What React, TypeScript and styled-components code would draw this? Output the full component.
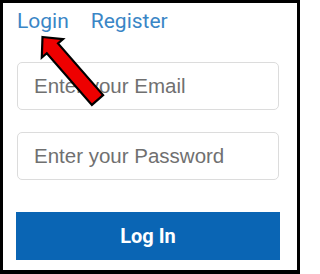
import {createGlobalStyle, styled} from 'styled-components';

const GlobalStyle = createGlobalStyle`
	html, body {
		margin: 0;
		padding: 0;
		background: #ffffff;
	}
	* {
		box-sizing: border-box;
	}
`;

const Card = styled.div`
	position: relative;
	width: 300px;
	height: 274px;
	border: 3px solid #000000;
	border-bottom-width: 4px;
	background: #ffffff;
	padding: 6px 14px 0 13px;
	display: flex;
	flex-direction: column;
`;

const Tabs = styled.nav`
	display: flex;
	gap: 22px;
	padding-left: 1px;
	font-family: Roboto, 'Liberation Sans', sans-serif;
	font-size: 21px;
	line-height: 24.6px;
`;

const TabLink = styled.a`
	color: #3a86c6;
	text-decoration: none;
	cursor: pointer;
`;

const Form = styled.form`
	display: flex;
	flex-direction: column;
	margin-top: 28px;
`;

const Field = styled.input`
	width: 262px;
	height: 48px;
	margin: 0 0 0 1px;
	padding: 0 16px;
	border: 1px solid #dcdcdc;
	border-radius: 5px;
	font-family: 'Liberation Sans', Arial, sans-serif;
	font-size: 20.5px;
	color: #333333;
	background: #ffffff;
	outline: none;
	& + & {
		margin-top: 22px;
	}
	&::placeholder {
		color: #707070;
	}
`;

const Submit = styled.button`
	width: 264px;
	height: 48px;
	margin-top: 32px;
	border: none;
	background: #0a65b4;
	color: #ffffff;
	font-family: Roboto, 'Liberation Sans', sans-serif;
	font-weight: 700;
	font-size: 20px;
	cursor: pointer;
`;

const Overlay = styled.svg`
	position: absolute;
	left: -3px;
	top: -3px;
	width: 300px;
	height: 274px;
	pointer-events: none;
`;

function Arrow() {
	return (
		<Overlay viewBox="0 0 300 274">
			<polygon
				points="42.5,37 63,39.1 58,43.4 103.1,95.1 91.9,104.9 46.8,53.2 41.8,57.5"
				fill="#ee0000"
				stroke="#000000"
				strokeWidth="2.2"
				strokeLinejoin="miter"
			/>
		</Overlay>
	);
}

function App() {
	return (
		<>
			<GlobalStyle />
			<Card>
				<Tabs>
					<TabLink>Login</TabLink>
					<TabLink>Register</TabLink>
				</Tabs>
				<Form onSubmit={(e) => e.preventDefault()}>
					<Field type="email" placeholder="Enter your Email" />
					<Field type="password" placeholder="Enter your Password" />
					<Submit type="submit">Log In</Submit>
				</Form>
				<Arrow />
			</Card>
		</>
	);
}

export default App;
